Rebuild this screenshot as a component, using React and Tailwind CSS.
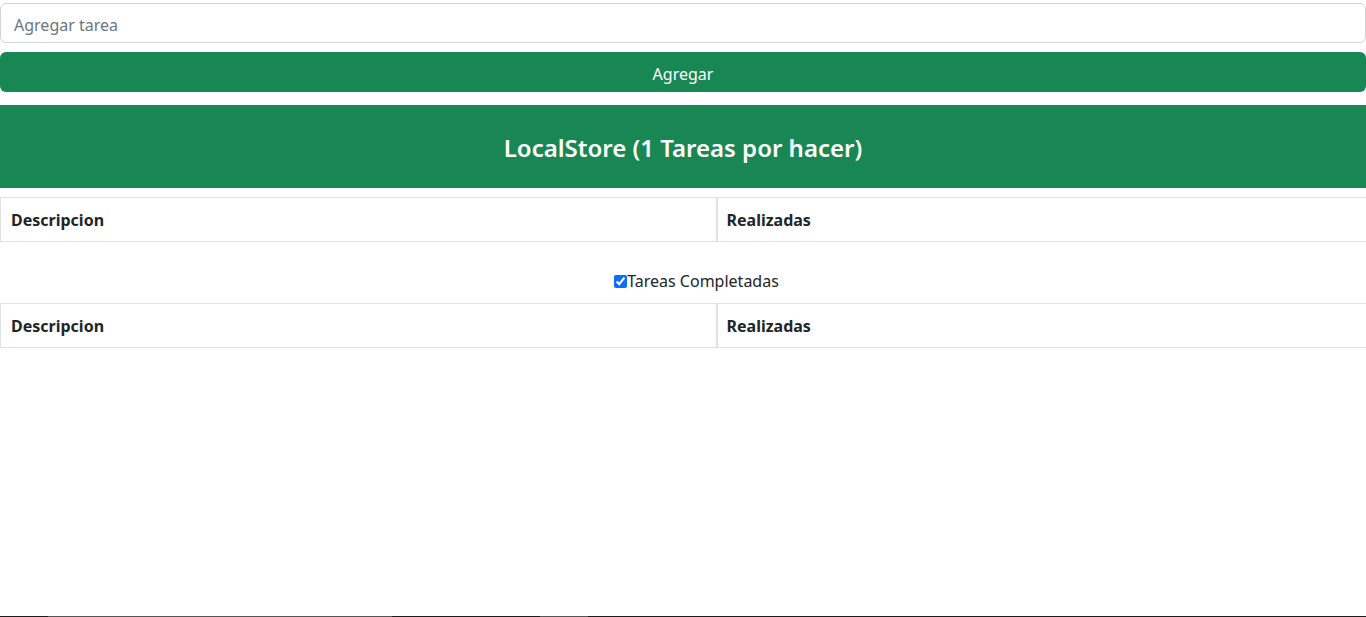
import { useState } from 'react';

const font = { fontFamily: '"Noto Sans", "Open Sans", sans-serif' };

function TaskTable() {
  return (
    <table className="w-[1368px] table-fixed border-collapse text-[16px] text-[#212529]">
      <thead>
        <tr>
          <th className="h-[44px] w-[716px] border border-[#dee2e6] px-[10px] pt-[1px] text-left font-bold">Descripcion</th>
          <th className="h-[44px] border border-[#dee2e6] border-l-2 px-[9px] pt-[1px] text-left font-bold">Realizadas</th>
        </tr>
      </thead>
    </table>
  );
}

export default function App() {
  const [task, setTask] = useState('');
  const [showDone, setShowDone] = useState(true);

  return (
    <div className="flex min-h-[617px] flex-col overflow-hidden bg-white" style={font}>
      <div className="pt-[3px]">
        <input
          className="block h-[40px] w-full rounded-[6px] border border-[#ced4da] px-[13px] pt-[4px] text-[16px] text-[#212529] outline-none placeholder:text-[#6c757d]"
          placeholder="Agregar tarea"
          value={task}
          onChange={(e) => setTask(e.target.value)}
        />
        <button className="mt-[9px] block h-[40px] w-full rounded-[6px] bg-[#198754] pt-[3px] text-[16px] text-white">
          Agregar
        </button>
      </div>

      <h3 className="mt-[13px] flex h-[83px] items-center justify-center bg-[#198754] pt-[2px] text-[24px] font-semibold text-white">
        LocalStore (1 Tareas por hacer)
      </h3>

      <div className="mt-[9px]">
        <TaskTable />
      </div>

      <div className="flex h-[61px] items-end justify-center pb-[10px] pl-[27px] text-[16px] text-[#212529]">
        <label className="flex items-center">
          <input
            type="checkbox"
            className="m-0 h-[13px] w-[13px] accent-[#0d6efd]"
            checked={showDone}
            onChange={(e) => setShowDone(e.target.checked)}
          />
          <span>Tareas Completadas</span>
        </label>
      </div>

      <TaskTable />

      <div className="mt-auto flex h-px">
        <div className="w-[48px] bg-[#1c1c1c]" />
        <div className="w-[344px] bg-[#555]" />
        <div className="w-[148px] bg-[#1c1c1c]" />
        <div className="w-[48px] bg-[#555]" />
        <div className="flex-1 bg-[#1c1c1c]" />
      </div>
    </div>
  );
}
